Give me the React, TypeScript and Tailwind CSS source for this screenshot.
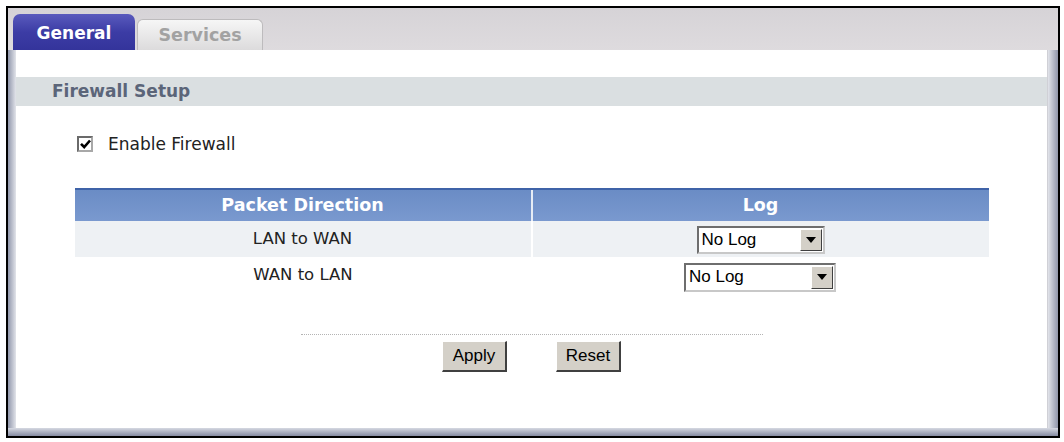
import React from 'react'

const verdana = "font-['DejaVu_Sans',Verdana,sans-serif]"
const arial = "font-['Liberation_Sans',Arial,sans-serif]"

const LogSelect: React.FC<{ width: string; height: string }> = ({ width, height }) => (
    <div
        className={`${width} ${height} flex items-stretch bg-white border-2 border-t-[#6e6e6e] border-l-[#6e6e6e] border-b-[#c8c8c8] border-r-[#c8c8c8]`}
    >
        <div className={`flex-1 flex items-center pl-[3px] text-[17px] text-black ${arial}`}>No Log</div>
        <div className="w-[22px] m-[1px] flex items-center justify-center bg-[#d4d0c8] border border-t-white border-l-white border-b-[#404040] border-r-[#404040]">
            <svg width="10" height="6" viewBox="0 0 10 6">
                <path d="M0 0 L10 0 L5 6 Z" fill="#000" />
            </svg>
        </div>
    </div>
)

const WinButton: React.FC<{ label: string }> = ({ label }) => (
    <button
        className={`w-[65px] h-[31px] bg-[#d4d0c8] text-[17px] text-black ${arial} border-t border-l border-t-white border-l-white border-b-2 border-r-2 border-b-[#404040] border-r-[#404040]`}
    >
        {label}
    </button>
)

export default function App() {
    return (
        <div className={`w-[1064px] h-[442px] bg-white pt-[6px] pl-[6px] pr-[4px] pb-[4px] ${verdana}`}>
            <div className="h-full border-2 border-black flex flex-col bg-[#dbd8db]">
                {/* tabs */}
                <div className="h-[42px] flex items-end pl-[5px] gap-[2px] bg-linear-to-b from-[#d6d3d7] to-[#dedbde]">
                    <div className="w-[122px] h-[36px] pt-[3px] rounded-t-[7px] bg-linear-to-b from-[#5a5abd] via-[#3c3ca5] to-[#34349b] flex items-center justify-center text-white font-bold text-[17px]">
                        General
                    </div>
                    <div className="w-[126px] h-[31px] rounded-t-[6px] border border-b-0 border-[#bdbbbd] bg-linear-to-b from-[#f6f6f6] to-[#dcdbdc] flex items-center justify-center text-[#a2a2a2] font-bold text-[17.5px]">
                        Services
                    </div>
                </div>

                <div className="flex-1 flex flex-col">
                    <div className="flex-1 flex">
                        <div className="w-[8px] bg-linear-to-r from-[#9298ac] to-[#e2e4ea]" />
                        <div className="flex-1 bg-white flex flex-col border-r border-[#d0d0d6]">
                            <div className="mt-[27px] h-[29px] bg-[#dadfe1] flex items-center pl-[36px] text-[17px] font-bold text-[#5b6579]">
                                Firewall Setup
                            </div>

                            <div className="mt-[26px] h-[24px] flex items-center pl-[61px] gap-[15px]">
                                <div className="w-[16px] h-[16px] bg-white border-2 border-t-[#6a6a6a] border-l-[#6a6a6a] border-b-[#a8a8a8] border-r-[#a8a8a8] flex items-center justify-center">
                                    <svg width="11" height="10" viewBox="0 0 11 10">
                                        <path d="M1 4.8 L4.2 8 L10 1.5" stroke="#000" strokeWidth="2.6" fill="none" />
                                    </svg>
                                </div>
                                <span className="text-[17px] text-[#222] pt-[2px]">Enable Firewall</span>
                            </div>

                            <div className="mt-[32px] mx-auto w-[914px] flex flex-col">
                                <div className="h-[33px] flex border-t-2 border-[#3f63a8] bg-linear-to-b from-[#6a8cc5] to-[#7a99cf] text-white font-bold text-[17.5px]">
                                    <div className="flex-1 flex items-center justify-center border-r-2 border-[#e6ecf5]">Packet Direction</div>
                                    <div className="flex-1 flex items-center justify-center">Log</div>
                                </div>
                                <div className="h-[36px] flex bg-[#eef1f4] text-[16.5px] text-[#222]">
                                    <div className="flex-1 flex items-center justify-center border-r-2 border-white">LAN to WAN</div>
                                    <div className="flex-1 flex items-center justify-center pt-[2px]">
                                        <LogSelect width="w-[128px]" height="h-[28px]" />
                                    </div>
                                </div>
                                <div className="h-[36px] flex bg-white text-[16.5px] text-[#222]">
                                    <div className="flex-1 flex items-center justify-center">WAN to LAN</div>
                                    <div className="flex-1 flex items-center justify-center pt-[4px]">
                                        <LogSelect width="w-[152px]" height="h-[29px]" />
                                    </div>
                                </div>
                            </div>

                            <div className="mt-[41px] mx-auto w-[462px] border-t border-dotted border-[#b4b4b4]" />

                            <div className="mt-[6px] flex justify-center gap-[49px]">
                                <WinButton label="Apply" />
                                <WinButton label="Reset" />
                            </div>
                        </div>
                        <div className="w-[10px] bg-linear-to-r from-[#e2e4ea] to-[#9096aa]" />
                    </div>
                    <div className="h-[8px] bg-linear-to-b from-[#d6d9e2] to-[#868ca2]" />
                </div>
            </div>
        </div>
    )
}
